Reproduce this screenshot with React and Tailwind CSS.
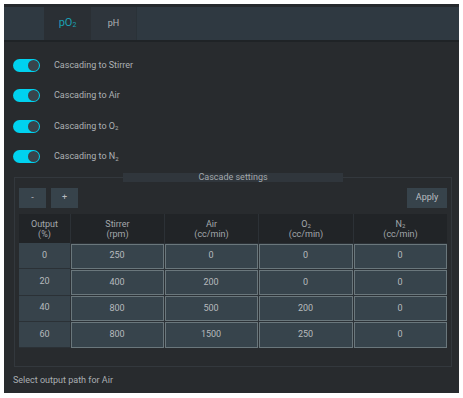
import { useState } from "react";

const font = { fontFamily: "Roboto, 'Liberation Sans', sans-serif" };

const rows = [
  ["0", "250", "0", "0", "0"],
  ["20", "400", "200", "0", "0"],
  ["40", "800", "500", "200", "0"],
  ["60", "800", "1500", "250", "0"],
];

function Toggle({ on, onClick }) {
  return (
    <button
      type="button"
      onClick={onClick}
      className={`w-[27px] h-[13px] rounded-full flex items-center px-[1.5px] ${
        on ? "bg-[#00d2ef] justify-end" : "bg-[#4a545b] justify-start"
      }`}
    >
      <span className="block w-[11px] h-[11px] rounded-full bg-[#39434b]" />
    </button>
  );
}

function App() {
  const [toggles, setToggles] = useState([true, true, true, true]);

  const labels = [
    <>Cascading to Stirrer</>,
    <>Cascading to Air</>,
    <>
      Cascading to O<sub className="text-[6px]">2</sub>
    </>,
    <>
      Cascading to N<sub className="text-[6px]">2</sub>
    </>,
  ];

  return (
    <div className="bg-white w-[463px] h-[398px] pt-1 pl-1" style={font}>
      <div className="w-[455px] h-[389px] bg-[#282b2e] flex flex-col">
        {/* TABS */}
        <div className="h-[38px] flex border-t-[3px] border-t-[#25292d] border-b-2 border-b-[#1f2326] bg-[#2f3941]">
          <div className="w-[40px]" />
          <div className="w-[47px] bg-[#2a2f34] flex items-center justify-center text-[11px] text-[#1aa0b3]">
            pO<sub className="text-[7px]">2</sub>
          </div>
          <div className="w-[45px] bg-[#2e353c] flex items-center justify-center text-[9px] text-[#aeb3b6]">
            pH
          </div>
          <div className="flex-1 border-l border-l-[#2a3238]" />
        </div>

        {/* TOGGLES */}
        <div className="pt-[8px] pl-[9px] flex flex-col">
          {labels.map((label, i) => (
            <div key={i} className="h-[30.5px] flex items-center gap-[14px]">
              <Toggle
                on={toggles[i]}
                onClick={() =>
                  setToggles(toggles.map((t, j) => (j === i ? !t : t)))
                }
              />
              <span className="text-[9px] text-[#adb1b4]">{label}</span>
            </div>
          ))}
        </div>

        {/* CASCADE SETTINGS */}
        <fieldset className="ml-[10px] mr-[7px] mt-[1px] border border-[#33383d] px-[4px] pb-[18px]">
          <legend className="mx-auto w-[220px] h-[9px] bg-[#30363c] text-center text-[9px] leading-[9px] text-[#a3a8ac]">
            Cascade settings
          </legend>

          <div className="flex items-center mt-[6px] gap-[5px]">
            <button className="w-[27px] h-[20px] bg-[#37434b] text-[9px] text-[#b9bdc0]">
              -
            </button>
            <button className="w-[27px] h-[20px] bg-[#37434b] text-[9px] text-[#b9bdc0]">
              +
            </button>
            <button className="ml-auto w-[40px] h-[20px] bg-[#37434b] text-[9px] text-[#b9bdc0]">
              Apply
            </button>
          </div>

          <div className="mt-[6px] grid grid-cols-[51px_94px_94px_95px_94px] text-[9px] text-[#b6babd]">
            <div className="h-[29px] bg-[#212427] flex flex-col items-center justify-center leading-[10px] text-[#a3a8ac]">
              <span>Output</span>
              <span>(%)</span>
            </div>
            <div className="h-[29px] bg-[#212427] border-l border-l-[#2c3136] flex flex-col items-center justify-center leading-[10px] text-[#a3a8ac]">
              <span>Stirrer</span>
              <span>(rpm)</span>
            </div>
            <div className="h-[29px] bg-[#212427] border-l border-l-[#2c3136] flex flex-col items-center justify-center leading-[10px] text-[#a3a8ac]">
              <span>Air</span>
              <span>(cc/min)</span>
            </div>
            <div className="h-[29px] bg-[#212427] border-l border-l-[#2c3136] flex flex-col items-center justify-center leading-[10px] text-[#a3a8ac]">
              <span>
                O<sub className="text-[6px]">2</sub>
              </span>
              <span>(cc/min)</span>
            </div>
            <div className="h-[29px] bg-[#212427] border-l border-l-[#2c3136] flex flex-col items-center justify-center leading-[10px] text-[#a3a8ac]">
              <span>
                N<sub className="text-[6px]">2</sub>
              </span>
              <span>(cc/min)</span>
            </div>

            {rows.map((row, r) =>
              row.map((val, c) =>
                c === 0 ? (
                  <div
                    key={`${r}-${c}`}
                    className="h-[26.25px] bg-[#37434b] border-b border-b-[#2b3136] flex items-center justify-center"
                  >
                    {val}
                  </div>
                ) : (
                  <div
                    key={`${r}-${c}`}
                    className="h-[26.25px] bg-[#2b3136] p-[0.5px]"
                  >
                    <div className="h-full border-[1.5px] border-[#6a777c] bg-[#37444c] flex items-center justify-center">
                      {val}
                    </div>
                  </div>
                ),
              ),
            )}
          </div>
        </fieldset>

        {/* FOOTER */}
        <div className="mt-auto h-[24px] pl-[9px] flex items-center text-[9px] text-[#aaafb2]">
          Select output path for Air
        </div>
      </div>
    </div>
  );
}

export default App;
